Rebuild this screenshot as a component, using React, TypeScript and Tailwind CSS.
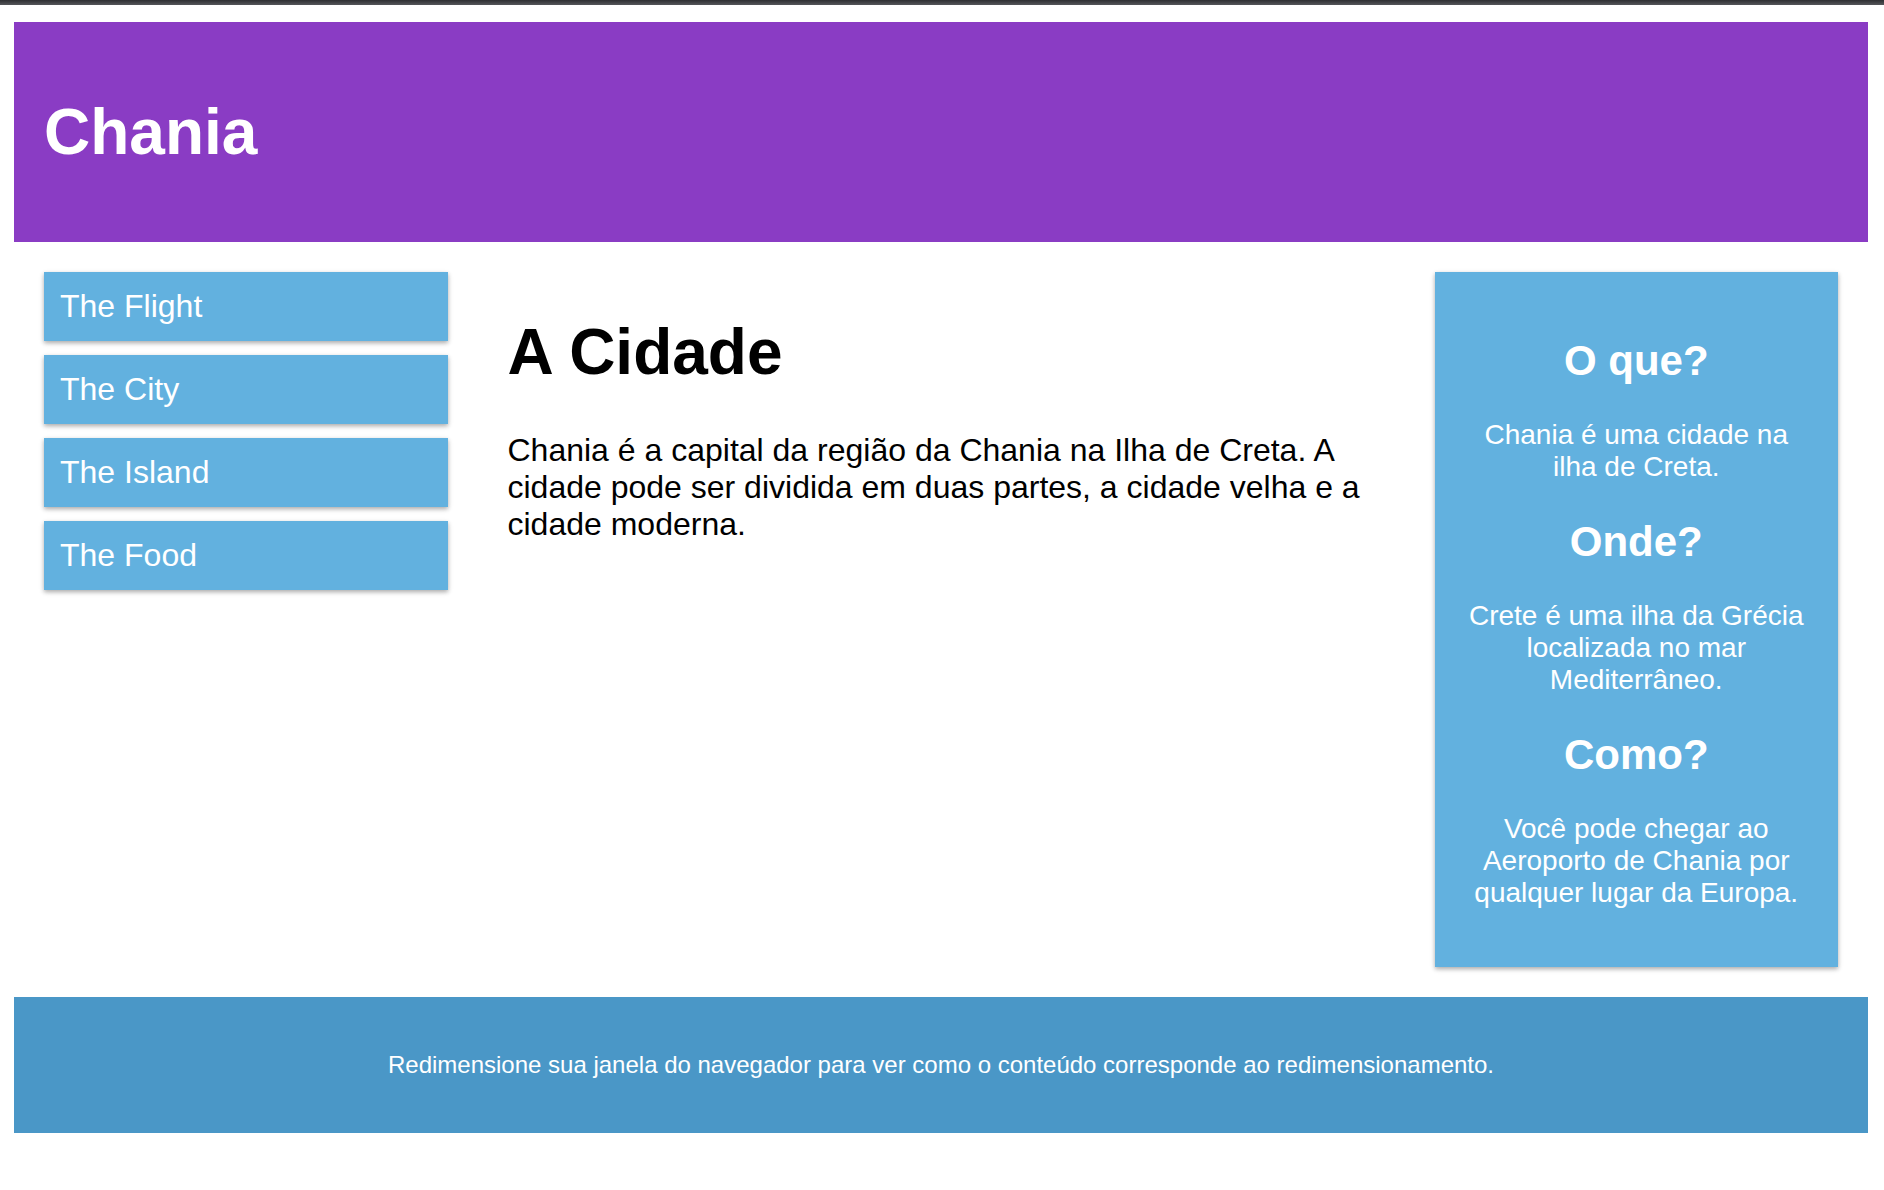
const menu = ["The Flight", "The City", "The Island", "The Food"];

const asideBlocks = [
  { title: "O que?", text: "Chania é uma cidade na ilha de Creta." },
  { title: "Onde?", text: "Crete é uma ilha da Grécia localizada no mar Mediterrâneo." },
  { title: "Como?", text: "Você pode chegar ao Aeroporto de Chania por qualquer lugar da Europa." },
];

const cardShadow =
  "shadow-[0_2px_6px_rgba(0,0,0,0.12),0_2px_4px_rgba(0,0,0,0.24)]";

export default function App() {
  return (
    <div className="min-h-screen bg-white font-['Liberation_Sans',Arial,sans-serif] leading-[normal] text-black">
      {/* browser chrome strip */}
      <div className="h-[5px] bg-gradient-to-b from-[#2e2f32] to-[#55565a]" />

      <div className="pt-[17px] pl-[14px] pr-[16px]">
        <header className="bg-[#8a3cc4] p-[30px] text-white">
          <h1 className="my-[43px] text-[64px] font-bold leading-[normal]">Chania</h1>
        </header>

        <div className="flex">
          <nav className="w-1/4 p-[30px]">
            <ul className="flex flex-col gap-[14px]">
              {menu.map((item) => (
                <li
                  key={item}
                  className={`bg-[#62b1df] p-4 text-[32px] leading-[normal] text-white ${cardShadow}`}
                >
                  {item}
                </li>
              ))}
            </ul>
          </nav>

          <main className="w-1/2 p-[30px]">
            <h1 className="my-[43px] text-[64px] font-bold leading-[normal]">A Cidade</h1>
            <p className="text-[32px] leading-[normal]">
              Chania é a capital da região da Chania na Ilha de Creta. A cidade pode ser dividida em
              duas partes, a cidade velha e a cidade moderna.
            </p>
          </main>

          <div className="w-1/4 p-[30px]">
            <aside className={`bg-[#62b1df] p-[30px] text-center text-white ${cardShadow}`}>
              {asideBlocks.map((b) => (
                <section key={b.title}>
                  <h2 className="my-[34.5px] text-[42px] font-bold leading-[normal]">{b.title}</h2>
                  <p className="my-[28px] text-[28px] leading-[normal]">{b.text}</p>
                </section>
              ))}
            </aside>
          </div>
        </div>

        <footer className="bg-[#4a97c7] p-[30px] text-center text-white">
          <p className="my-6 text-[24px] leading-[normal]">
            Redimensione sua janela do navegador para ver como o conteúdo corresponde ao
            redimensionamento.
          </p>
        </footer>
      </div>
    </div>
  );
}
